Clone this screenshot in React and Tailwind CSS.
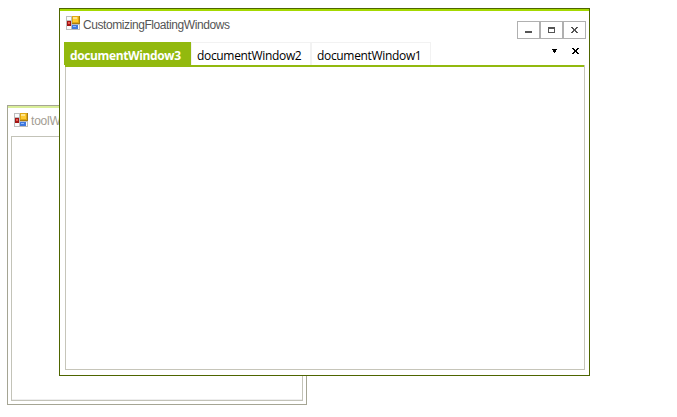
function FormIcon({ className }) {
  return (
    <svg className={className} width="14" height="14" viewBox="0 0 14 14" shapeRendering="crispEdges">
      <path d="M0 0h14v14H0z" fill="#bdbdbd" />
      <path d="M1 1h4v3H1zM1 10h4v3H1zM6 9h7v4H6z" fill="#fbfbfb" />
      <rect x="6" y="0" width="8" height="8" fill="#a87c10" />
      <rect x="6" y="0" width="7" height="7" fill="#dfa914" />
      <rect x="7" y="1" width="5" height="5" fill="#ffcb30" />
      <rect x="7" y="1" width="4" height="2" fill="#ffe58a" />
      <rect x="1" y="5" width="4" height="5" fill="#a31515" />
      <rect x="2" y="6" width="2" height="2" fill="#e8574c" />
      <rect x="6" y="9" width="6" height="4" fill="#3f78dd" />
      <rect x="7" y="10" width="3" height="1" fill="#8fbaff" />
    </svg>
  );
}

function CloseGlyph() {
  return (
    <svg width="7" height="6" fill="currentColor" shapeRendering="crispEdges">
      <path d="M0 0h2v1H0zM5 0h2v1H5zM1 1h2v1H1zM4 1h2v1H4zM2 2h3v2H2zM1 4h2v1H1zM4 4h2v1H4zM0 5h2v1H0zM5 5h2v1H5z" />
    </svg>
  );
}

function CaptionButton({ children }) {
  return (
    <button className="flex h-[18px] w-[23px] items-center justify-center border border-[#b0b0b0] bg-white text-[#555555]">
      {children}
    </button>
  );
}

function ToolWindow() {
  return (
    <section className="absolute left-[7px] top-[105px] flex h-[300px] w-[300px] flex-col border border-[#a5a594] bg-white px-[3px] pb-[3px]">
      <div className="-mx-[3px] h-0.5 shrink-0 bg-[#d9ee99]" />
      <header className="flex h-7 shrink-0 items-start gap-[3px] pl-[3px] pt-[5px]">
        <FormIcon className="shrink-0" />
        <span className="pt-[1px] font-['Liberation_Sans',Arial,sans-serif] text-[12px] leading-[15px] tracking-[-0.2px] text-[#a39d93]">toolWindow1</span>
      </header>
      <div className="flex-1 border border-[#c3c3b8] shadow-[inset_0_-1px_0_#eeeeee]" />
    </section>
  );
}

function MainWindow() {
  return (
    <section className="absolute left-[59px] top-[8px] flex h-[368px] w-[531px] flex-col border border-[#4e6500] bg-white">
      <div className="h-0.5 shrink-0 bg-[#a5d900]" />
      <header className="flex h-[31px] shrink-0 items-start pl-1.5 pr-[3px]">
        <FormIcon className="mt-[5px] shrink-0" />
        <span className="ml-[3px] mt-[7px] flex-1 font-['Liberation_Sans',Arial,sans-serif] text-[12px] leading-[15px] tracking-[-0.42px] text-[#555555]">
          CustomizingFloatingWindows
        </span>
        <div className="mt-2.5 flex">
          <CaptionButton>
            <svg width="7" height="6" fill="currentColor" shapeRendering="crispEdges"><path d="M0 4h7v2H0z" /></svg>
          </CaptionButton>
          <CaptionButton>
            <svg width="7" height="6" fill="currentColor" shapeRendering="crispEdges"><path d="M0 0h7v6H0zM1 2v3h5V2z" fillRule="evenodd" /></svg>
          </CaptionButton>
          <CaptionButton>
            <CloseGlyph />
          </CaptionButton>
        </div>
      </header>
      <nav className="mx-1 flex h-[23px] shrink-0 font-['Open_Sans','Noto_Sans',sans-serif] text-[12px] leading-[17px] tracking-[-0.33px] text-black">
        <div className="w-[127px] bg-[#92b90e] pl-1.5 pt-[5px] font-bold tracking-[-0.38px] text-white">documentWindow3</div>
        <div className="w-[121px] border-l border-r-2 border-t border-[#f2f2f2] pl-[5px] pt-1">documentWindow2</div>
        <div className="w-[119px] border-r border-t border-[#f2f2f2] pl-[5px] pt-1">documentWindow1</div>
        <div className="flex flex-1 items-start justify-end gap-[15px] pr-[6px] pt-[6px]">
          <svg className="mt-[1px]" width="5" height="4" shapeRendering="crispEdges"><path d="M0 0h5v1H4v2H3v1H2V3H1V1H0z" /></svg>
          <CloseGlyph />
        </div>
      </nav>
      <div className="ml-[5px] mr-1 h-0.5 shrink-0 border-r border-[#c6c5b9] bg-[#92b90e]" />
      <div className="mb-[5px] ml-[5px] mr-1 flex-1 border-x border-b border-[#c6c5b9]" />
    </section>
  );
}

export default function App() {
  return (
    <main className="relative h-[417px] w-[677px] overflow-hidden bg-white">
      <ToolWindow />
      <MainWindow />
    </main>
  );
}
